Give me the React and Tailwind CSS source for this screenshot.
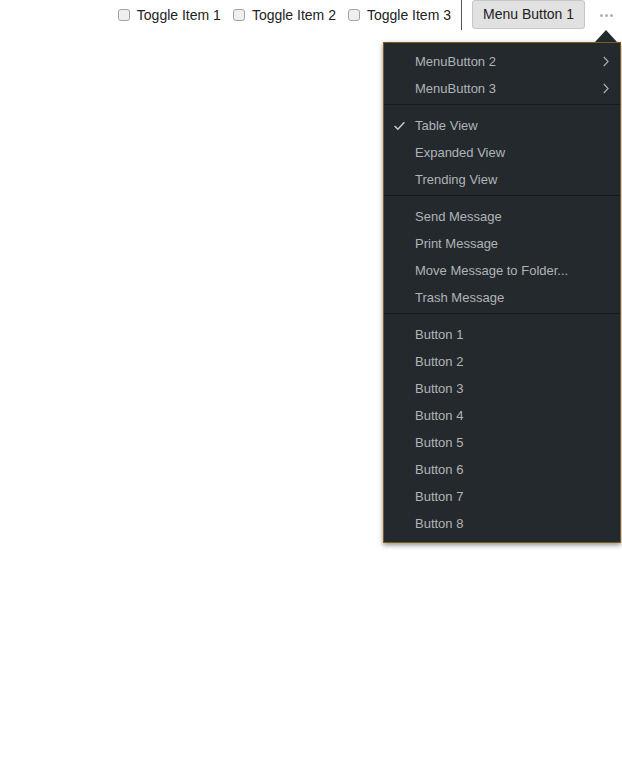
import React from 'react';

const ToggleItem = ({ label }) => (
  <label className="flex items-center gap-[7px]">
    <span className="w-[12px] h-[12px] rounded-[3px] border border-[#a3a3a3] bg-[#efefef]" />
    <span className="text-[14px] text-[#222]">{label}</span>
  </label>
);

const Check = () => (
  <svg className="w-[13px] h-[13px]" viewBox="0 0 16 16" fill="none" stroke="#c9cdd0" strokeWidth="1.8">
    <path d="M2 8.5l4 4L14 4" />
  </svg>
);

const Chevron = () => (
  <svg className="w-[6px] h-[11px]" viewBox="0 0 6 11" fill="none" stroke="#aeb3b7" strokeWidth="1.1">
    <path d="M0.8 1l4.3 4.5L0.8 10" />
  </svg>
);

const Item = ({ label, checked, sub }) => (
  <div className="relative flex items-center h-[27px] pl-[31px] pr-[11px] text-[13px] text-[#afb4b8]">
    {checked && (
      <span className="absolute left-[9px] top-[7px]">
        <Check />
      </span>
    )}
    <span className="flex-1">{label}</span>
    {sub && <Chevron />}
  </div>
);

const Divider = () => (
  <div className="mt-[2px] mb-[7px] h-px bg-[#161a1d]" />
);

export default function App() {
  const groups = [
    [{ label: 'MenuButton 2', sub: true }, { label: 'MenuButton 3', sub: true }],
    [{ label: 'Table View', checked: true }, { label: 'Expanded View' }, { label: 'Trending View' }],
    [{ label: 'Send Message' }, { label: 'Print Message' }, { label: 'Move Message to Folder...' }, { label: 'Trash Message' }],
    [1, 2, 3, 4, 5, 6, 7, 8].map((n) => ({ label: `Button ${n}` })),
  ];

  return (
    <div className="relative w-[622px] h-[768px] bg-white font-['Liberation_Sans',Arial,sans-serif]">
      {/* Toolbar */}
      <div className="flex items-center justify-end h-[30px] pr-[9px]">
        <div className="flex items-center gap-[12px]">
          <ToggleItem label="Toggle Item 1" />
          <ToggleItem label="Toggle Item 2" />
          <ToggleItem label="Toggle Item 3" />
        </div>
        <div className="ml-[10px] w-px h-[30px] bg-[#555]" />
        <button className="ml-[10px] h-[29px] w-[113px] mb-[1px] rounded-[3px] border border-[#c6c6c6] bg-[#e1e1e1] text-[14px] text-[#222]">
          Menu Button 1
        </button>
        <div className="ml-[15px] flex items-center gap-[2px] pt-[1px]">
          <span className="w-[3px] h-[3px] rounded-full bg-[#b0b0b0]" />
          <span className="w-[3px] h-[3px] rounded-full bg-[#b0b0b0]" />
          <span className="w-[3px] h-[3px] rounded-full bg-[#b0b0b0]" />
        </div>
      </div>

      {/* Dropdown menu */}
      <div className="absolute left-[383px] top-[42px] w-[238px]">
        <div className="absolute right-[4px] -top-[12px] w-0 h-0 border-l-[11px] border-r-[11px] border-b-[12px] border-l-transparent border-r-transparent border-b-[#24292d]" />
        <div className="border border-[#7d5e16] bg-[#24292d] pt-[5px] pb-[5px] shadow-[0_2px_5px_rgba(0,0,0,0.45)]">
          {groups.map((g, gi) => (
            <div key={gi}>
              {g.map((it) => (
                <Item key={it.label} {...it} />
              ))}
              {gi < groups.length - 1 && <Divider />}
            </div>
          ))}
        </div>
      </div>
    </div>
  );
}
